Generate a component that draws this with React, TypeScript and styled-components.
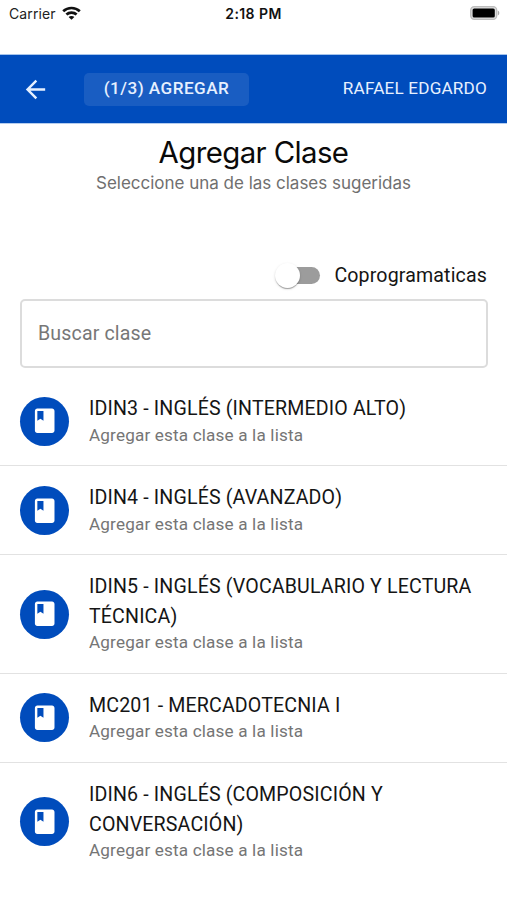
import React from "react";
import styled, { createGlobalStyle } from "styled-components";

const Global = createGlobalStyle`
  * { box-sizing: border-box; }
  body { margin: 0; background: #fff; font-family: Roboto, sans-serif; color: #151515; }
`;

const Screen = styled.div`
  width: 507px;
  height: 900px;
  overflow: hidden;
  background: #fff;
`;

const StatusBar = styled.div`
  height: 55px;
  padding: 3px 7px 0 9px;
  display: grid;
  grid-template-columns: 1fr auto 1fr;
  align-items: start;
  font-family: Inter, sans-serif;
  font-size: 14px;
  line-height: 22px;
`;

const Carrier = styled.div`
  display: flex;
  align-items: center;
  gap: 6px;
  letter-spacing: 0.1px;
  color: #222;
`;

const WifiIcon = styled.svg`
  margin-top: -2px;
`;

const Clock = styled.div`
  font-weight: 600;
  font-size: 14px;
  letter-spacing: 0.42px;
  margin-right: 2px;
  color: #111;
`;

const Battery = styled.svg`
  justify-self: end;
  margin-top: 2px;
`;

const AppBar = styled.header`
  height: 68px;
  padding: 0 20px 0 21px;
  display: flex;
  align-items: center;
  background: #004cbc;
  box-shadow: 0 -1px 0 #a5c4ec, 0 1px 0 #b5cdee;
  color: #e6f0ff;
`;

const BackIcon = styled.svg`
  flex: none;
  margin-right: 34px;
`;

const StepButton = styled.button`
  width: 165px;
  height: 33px;
  padding: 0 0 2px;
  border: 0;
  border-radius: 5px;
  background: #195dc2;
  color: #e6f0ff;
  font: 500 17.14px/31px Roboto, sans-serif;
  letter-spacing: 0.47px;
`;

const UserName = styled.span`
  margin: -2px 0 0 auto;
  font-size: 17.14px;
  letter-spacing: 0.19px;
  white-space: nowrap;
`;

const Heading = styled.section`
  height: 138px;
  padding-top: 12px;
  text-align: center;
  font-family: Inter, sans-serif;
`;

const Title = styled.h1`
  margin: 0;
  font-size: 29.4px;
  font-weight: 400;
  line-height: 36px;
  letter-spacing: -0.6px;
  color: #0a0a0a;
`;

const Subtitle = styled.p`
  margin: 0;
  font-size: 17px;
  line-height: 24px;
  letter-spacing: -0.01px;
  color: #6f6f6f;
`;

const SwitchRow = styled.label`
  height: 38px;
  padding: 0 20px 9px;
  display: flex;
  align-items: center;
  justify-content: flex-end;
  gap: 14px;
  font-size: 19.6px;
  line-height: 29px;
  letter-spacing: 0.14px;
`;

const Track = styled.span`
  width: 42px;
  height: 17px;
  border-radius: 9px;
  display: flex;
  align-items: center;
  background: #9c9c9c;
`;

const Thumb = styled.span`
  width: 25px;
  height: 25px;
  margin-left: -3px;
  border-radius: 50%;
  background: #fff;
  box-shadow: 0 2px 1px -1px rgba(0, 0, 0, 0.2), 0 1px 1px rgba(0, 0, 0, 0.14),
    0 1px 3px rgba(0, 0, 0, 0.12);
`;

const Search = styled.input`
  display: block;
  width: 468px;
  height: 69px;
  margin: 0 0 0 20px;
  padding: 0 16px 1px;
  border: 2px solid #dcdcdc;
  border-radius: 5px;
  outline: 0;
  font: 400 19.6px Roboto, sans-serif;
  letter-spacing: 0.13px;
  &::placeholder {
    color: #777;
    opacity: 1;
  }
`;

const List = styled.ul`
  margin: 0;
  padding: 9px 0 0;
  list-style: none;
`;

const Item = styled.li`
  padding: 17.2px 20px 17.05px 20.4px;
  display: flex;
  align-items: center;
  border-bottom: 1px solid #e2e2e2;
  &:last-child {
    border-bottom: 0;
  }
`;

const Avatar = styled.span`
  flex: none;
  width: 49px;
  height: 49px;
  margin-right: 19.6px;
  border-radius: 50%;
  display: flex;
  align-items: center;
  justify-content: center;
  background: #004cbc;
`;

const ItemTitle = styled.div`
  font-size: 19.6px;
  line-height: 29.4px;
  letter-spacing: 0.15px;
`;

const ItemNote = styled.div`
  margin-top: -1px;
  padding-bottom: 1px;
  font-size: 17.14px;
  line-height: 24.5px;
  letter-spacing: 0.16px;
  color: #757575;
`;

const classes = [
  "IDIN3 - INGLÉS (INTERMEDIO ALTO)",
  "IDIN4 - INGLÉS (AVANZADO)",
  "IDIN5 - INGLÉS (VOCABULARIO Y LECTURA TÉCNICA)",
  "MC201 - MERCADOTECNIA I",
  "IDIN6 - INGLÉS (COMPOSICIÓN Y CONVERSACIÓN)",
];

export default function App() {
  return (
    <Screen>
      <Global />
      <StatusBar>
        <Carrier>
          Carrier
          <WifiIcon width="19" height="14" viewBox="0 0 19 14" fill="none" stroke="#111" strokeWidth="2.7">
            <path d="M1.2 5.2C5.8.9 13.2.9 17.8 5.2" />
            <path d="M4.4 8.6c2.8-2.6 7.4-2.6 10.2 0" />
            <path d="M9.5 13.8 6.6 11c1.6-1.5 4.2-1.5 5.8 0z" fill="#111" stroke="none" />
          </WifiIcon>
        </Carrier>
        <Clock>2:18 PM</Clock>
        <Battery width="31" height="16" viewBox="0 0 31 16">
          <rect x="1.7" y="1.7" width="26" height="12.6" rx="3.5" fill="#dedede" stroke="#bdbdbd" strokeWidth="1.3" />
          <rect x="3.6" y="3.4" width="22.2" height="9.2" rx="1.6" fill="#000" />
          <path d="M28.8 5.5c2 .8 2 4.2 0 5z" fill="#aaa" />
        </Battery>
      </StatusBar>
      <AppBar>
        <BackIcon width="29" height="29" viewBox="0 0 24 24" fill="#e6f0ff">
          <path d="M20 11H7.83l5.59-5.59L12 4l-8 8 8 8 1.41-1.41L7.83 13H20v-2z" />
        </BackIcon>
        <StepButton>(1/3) AGREGAR</StepButton>
        <UserName>RAFAEL EDGARDO</UserName>
      </AppBar>
      <Heading>
        <Title>Agregar Clase</Title>
        <Subtitle>Seleccione una de las clases sugeridas</Subtitle>
      </Heading>
      <SwitchRow>
        <Track>
          <Thumb />
        </Track>
        Coprogramaticas
      </SwitchRow>
      <Search placeholder="Buscar clase" />
      <List>
        {classes.map((name) => (
          <Item key={name}>
            <Avatar>
              <svg width="29.4" height="29.4" viewBox="0 0 24 24" fill="#fff">
                <path d="M18 2H6c-1.1 0-2 .9-2 2v16c0 1.1.9 2 2 2h12c1.1 0 2-.9 2-2V4c0-1.1-.9-2-2-2zM6 4h5v8l-2.5-1.5L6 12V4z" />
              </svg>
            </Avatar>
            <div>
              <ItemTitle>{name}</ItemTitle>
              <ItemNote>Agregar esta clase a la lista</ItemNote>
            </div>
          </Item>
        ))}
      </List>
    </Screen>
  );
}
